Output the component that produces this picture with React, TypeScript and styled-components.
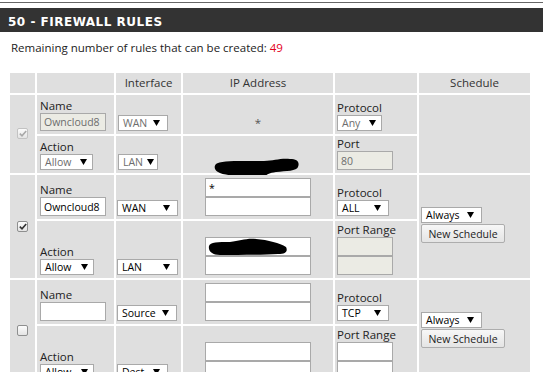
import React from "react"
import styled, { createGlobalStyle } from "styled-components"

const GlobalStyle = createGlobalStyle`
  body {
    margin: 0;
    background: #fff;
    color: #222;
    font-family: "Open Sans", "Noto Sans", sans-serif;
  }
`

const Page = styled.div`
  width: 543px;
  height: 372px;
  overflow: hidden;
`

const TopRule = styled.div`
  height: 1px;
  margin-top: 2px;
  background: #666;
`

const TitleBar = styled.div`
  margin-top: 5px;
  height: 22px;
  padding: 2px 0 0 8px;
  background: #333;
  color: #fff;
  font-family: "DejaVu Sans", sans-serif;
  font-weight: bold;
  font-size: 12px;
  letter-spacing: 0.5px;
  line-height: 24px;
`

const Remaining = styled.div`
  margin-top: 9px;
  padding-left: 11px;
  font-size: 11.5px;
  line-height: 14px;
`

const Count = styled.span`
  color: #e3001b;
`

const Rules = styled.table`
  margin: 16px 0 0 8px;
  border-collapse: separate;
  border-spacing: 2px;
  table-layout: fixed;
  width: 524px;
  font-size: 11.5px;
`

const Row = styled.tr<{ $h: number }>`
  height: ${(p) => p.$h}px;
`

const HeadCell = styled.th`
  padding: 0;
  background: #dfdfdf;
  color: #333;
  font-weight: normal;
  text-align: center;
  vertical-align: middle;
  line-height: 14px;
`

const Cell = styled.td<{ $valign?: string; $center?: boolean; $pl?: number }>`
  position: relative;
  padding: 0 0 3px ${(p) => p.$pl ?? 0}px;
  background: #dfdfdf;
  vertical-align: ${(p) => p.$valign ?? "bottom"};
  text-align: ${(p) => (p.$center ? "center" : "left")};
`

const Field = styled.div`
  display: flex;
  flex-direction: column;
  align-items: flex-start;
`

const Label = styled.span`
  line-height: 13px;
  margin-bottom: 1px;
  color: #222;
`

const Input = styled.input<{ $w: number; $h?: number }>`
  box-sizing: border-box;
  display: block;
  width: ${(p) => p.$w}px;
  height: ${(p) => p.$h ?? 19}px;
  margin: 0;
  padding: 0 3px;
  border: 1px solid #a9a9a9;
  border-radius: 0;
  background: #fff;
  color: #000;
  font-family: "Open Sans", sans-serif;
  font-size: 10.5px;
  outline: none;
  &:disabled {
    background: #ebebe4;
    color: #6d6d6d;
  }
`

const Stack = styled.div<{ $w: number }>`
  position: relative;
  width: ${(p) => p.$w}px;
  display: flex;
  flex-direction: column;
`

const CenterStack = styled(Stack)`
  margin: 0 auto;
`

const SelectBox = styled.div<{ $w: number; $pr: number; $disabled?: boolean }>`
  box-sizing: border-box;
  display: flex;
  align-items: center;
  justify-content: space-between;
  width: ${(p) => p.$w}px;
  height: 16px;
  padding: 0 ${(p) => p.$pr}px 0 4px;
  border: 1px solid #a9a9a9;
  background: #fff;
  color: ${(p) => (p.$disabled ? "#6d6d6d" : "#000")};
  font-size: 10.5px;
  line-height: 14px;
`

const Button = styled.button`
  box-sizing: border-box;
  display: block;
  width: 84px;
  height: 19px;
  margin-top: 1px;
  padding: 0;
  border: 1px solid #adadad;
  border-radius: 2px;
  background: linear-gradient(#f7f7f7, #e4e4e4);
  color: #222;
  font-family: "Open Sans", sans-serif;
  font-size: 10.5px;
`

const Check = styled.span<{ $disabled?: boolean }>`
  box-sizing: border-box;
  display: inline-flex;
  align-items: center;
  justify-content: center;
  width: 11px;
  height: 11px;
  margin-top: 3px;
  border: 1px solid ${(p) => (p.$disabled ? "#c2c2c2" : "#8e8f8f")};
  border-radius: 2px;
  background: linear-gradient(#fcfcfc, #e4e4e4);
`

const Star = styled.div`
  color: #555;
  line-height: 13px;
  padding-bottom: 2px;
`

const Redaction = styled.svg`
  position: absolute;
  overflow: visible;
  pointer-events: none;
`

function Arrow() {
  return (
    <svg width="7" height="6" viewBox="0 0 7 6">
      <polygon points="0,0 7,0 3.5,6" fill="#000" />
    </svg>
  )
}

function Select({
  w,
  text,
  disabled,
  pr = 7,
}: {
  w: number
  text: string
  disabled?: boolean
  pr?: number
}) {
  return (
    <SelectBox $w={w} $pr={pr} $disabled={disabled}>
      <span>{text}</span>
      <Arrow />
    </SelectBox>
  )
}

function CheckBox({ checked, disabled }: { checked?: boolean; disabled?: boolean }) {
  return (
    <Check $disabled={disabled}>
      {checked && (
        <svg width="8" height="7" viewBox="0 0 8 7">
          <path
            d="M0.8 3.6 L3 5.8 L7.2 0.9"
            fill="none"
            stroke={disabled ? "#a8a8a8" : "#333"}
            strokeWidth="1.6"
          />
        </svg>
      )}
    </Check>
  )
}

function Schedule() {
  return (
    <>
      <Select w={61} text="Always" />
      <Button>New Schedule</Button>
    </>
  )
}

export default function App() {
  return (
    <Page>
      <GlobalStyle />
      <TopRule />
      <TitleBar>50 - FIREWALL RULES</TitleBar>
      <Remaining>
        Remaining number of rules that can be created: <Count>49</Count>
      </Remaining>
      <Rules>
        <colgroup>
          <col style={{ width: 25 }} />
          <col style={{ width: 77 }} />
          <col style={{ width: 65 }} />
          <col style={{ width: 150 }} />
          <col style={{ width: 82 }} />
          <col style={{ width: 111 }} />
        </colgroup>
        <tbody>
          <Row $h={20}>
            <HeadCell />
            <HeadCell />
            <HeadCell>Interface</HeadCell>
            <HeadCell>IP Address</HeadCell>
            <HeadCell />
            <HeadCell>Schedule</HeadCell>
          </Row>

          {/* rule 1: greyed out */}
          <Row $h={39}>
            <Cell rowSpan={2} $valign="middle" $center>
              <CheckBox checked disabled />
            </Cell>
            <Cell $pl={3}>
              <Field>
                <Label>Name</Label>
                <Input $w={66} $h={18} value="Owncloud8" disabled readOnly />
              </Field>
            </Cell>
            <Cell $pl={2}>
              <Select w={50} text="WAN" disabled />
            </Cell>
            <Cell $center>
              <Star>*</Star>
            </Cell>
            <Cell $pl={2}>
              <Field>
                <Label>Protocol</Label>
                <Select w={45} text="Any" disabled pr={5} />
              </Field>
            </Cell>
            <Cell rowSpan={2} />
          </Row>
          <Row $h={37}>
            <Cell $pl={3}>
              <Field>
                <Label>Action</Label>
                <Select w={53} text="Allow" disabled pr={5} />
              </Field>
            </Cell>
            <Cell $pl={2}>
              <Select w={40} text="LAN" disabled pr={3} />
            </Cell>
            <Cell>
              <Redaction width="84" height="20" style={{ left: 31, top: 23 }}>
                <path
                  d="M2 5 C6 1 30 2 50 2 C60 2 66 -1 76 0 C83 0 86 3 84 8 C83 12 72 12 62 13 C55 14 54 15 50 18 C44 21 36 20 30 17 C22 17 8 16 4 13 C0 11 0 7 2 5 Z"
                  fill="#000"
                />
              </Redaction>
            </Cell>
            <Cell $pl={2}>
              <Field>
                <Label>Port</Label>
                <Input $w={56} value="80" disabled readOnly />
              </Field>
            </Cell>
          </Row>

          {/* rule 2 */}
          <Row $h={44}>
            <Cell rowSpan={2} $valign="middle" $center>
              <CheckBox checked />
            </Cell>
            <Cell $pl={3}>
              <Field>
                <Label>Name</Label>
                <Input $w={66} value="Owncloud8" readOnly />
              </Field>
            </Cell>
            <Cell $pl={1}>
              <Select w={61} text="WAN" />
            </Cell>
            <Cell>
              <CenterStack $w={106}>
                <Input $w={106} value="*" readOnly />
                <Input $w={106} value="" readOnly />
              </CenterStack>
            </Cell>
            <Cell $pl={2}>
              <Field>
                <Label>Protocol</Label>
                <Select w={52} text="ALL" />
              </Field>
            </Cell>
            <Cell rowSpan={2} $valign="middle" $pl={2}>
              <Schedule />
            </Cell>
          </Row>
          <Row $h={57}>
            <Cell $pl={3}>
              <Field>
                <Label>Action</Label>
                <Select w={54} text="Allow" pr={5} />
              </Field>
            </Cell>
            <Cell $pl={1}>
              <Select w={61} text="LAN" />
            </Cell>
            <Cell>
              <CenterStack $w={106}>
                <Input $w={106} value="" readOnly />
                <Input $w={106} value="" readOnly />
                <Redaction width="80" height="18" style={{ left: 3, top: 1 }}>
                  <path
                    d="M1 8 C2 4 10 4 22 4 C32 3 38 0 48 1 C60 2 72 5 78 9 C80 13 78 16 70 16 C55 17 30 17 12 17 C4 17 0 13 1 8 Z"
                    fill="#000"
                  />
                </Redaction>
              </CenterStack>
            </Cell>
            <Cell $pl={2}>
              <Field>
                <Label>Port Range</Label>
                <Stack $w={56}>
                  <Input $w={56} value="" disabled readOnly />
                  <Input $w={56} value="" disabled readOnly />
                </Stack>
              </Field>
            </Cell>
          </Row>

          {/* rule 3: empty */}
          <Row $h={44}>
            <Cell rowSpan={2} $valign="middle" $center>
              <CheckBox />
            </Cell>
            <Cell $pl={3}>
              <Field>
                <Label>Name</Label>
                <Input $w={66} value="" readOnly />
              </Field>
            </Cell>
            <Cell $pl={1}>
              <Select w={60} text="Source" />
            </Cell>
            <Cell>
              <CenterStack $w={106}>
                <Input $w={106} value="" readOnly />
                <Input $w={106} value="" readOnly />
              </CenterStack>
            </Cell>
            <Cell $pl={2}>
              <Field>
                <Label>Protocol</Label>
                <Select w={52} text="TCP" />
              </Field>
            </Cell>
            <Cell rowSpan={2} $valign="middle" $pl={2}>
              <Schedule />
            </Cell>
          </Row>
          <Row $h={57}>
            <Cell $pl={3}>
              <Field>
                <Label>Action</Label>
                <Select w={54} text="Allow" pr={5} />
              </Field>
            </Cell>
            <Cell $pl={1}>
              <Select w={51} text="Dest" />
            </Cell>
            <Cell>
              <CenterStack $w={106}>
                <Input $w={106} value="" readOnly />
                <Input $w={106} value="" readOnly />
              </CenterStack>
            </Cell>
            <Cell $pl={2}>
              <Field>
                <Label>Port Range</Label>
                <Stack $w={56}>
                  <Input $w={56} value="" readOnly />
                  <Input $w={56} value="" readOnly />
                </Stack>
              </Field>
            </Cell>
          </Row>
        </tbody>
      </Rules>
    </Page>
  )
}
